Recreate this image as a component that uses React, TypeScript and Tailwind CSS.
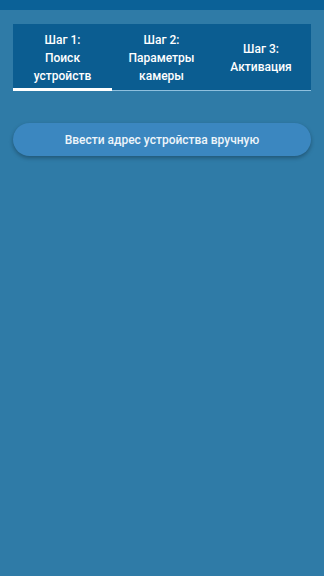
import React from "react";

export default function App() {
  const font = { fontFamily: "Roboto, 'Noto Sans', sans-serif" };
  return (
    <div className="w-[324px] h-[576px] bg-[#2f7ba7] flex flex-col" style={font}>
      <div className="h-[10px] bg-[#0b6197]" />
      <div className="px-[13px] pt-[14px]">
        <div className="bg-[#0b5d91] flex flex-col">
          <div className="flex h-[64px] pt-[4px] text-white text-[12px] font-medium leading-[18px] text-center">
            <div className="w-[99px] flex items-center justify-center">
              <span>Шаг 1:<br />Поиск<br />устройств</span>
            </div>
            <div className="w-[99px] flex items-center justify-center">
              <span>Шаг 2:<br />Параметры<br />камеры</span>
            </div>
            <div className="flex-1 flex items-center justify-center">
              <span>Шаг 3:<br />Активация</span>
            </div>
          </div>
          <div className="flex h-[3px]">
            <div className="w-[99px] bg-white" />
            <div className="flex-1 flex flex-col justify-end">
              <div className="h-[1px] bg-[#8fc0de]" />
            </div>
          </div>
        </div>
      </div>
      <div className="px-[13px] pt-[32px]">
        <button className="w-full h-[33px] rounded-full bg-[#3b87c0] text-[#eef5fa] text-[12px] font-medium shadow-[0_2px_4px_rgba(0,0,0,0.3)]">
          Ввести адрес устройства вручную
        </button>
      </div>
    </div>
  );
}
